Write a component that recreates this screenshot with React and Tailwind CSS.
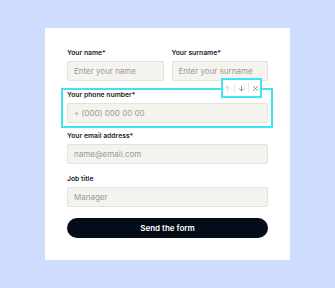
import React from 'react';

// Simple contact form card with a selected (highlighted) field
const Field = ({ label, placeholder }) => (
  <div className="flex flex-col">
    <label className="block text-[6.8px] leading-[10px] font-semibold text-[#1b1b1b] mb-[3px]">{label}</label>
    <input
      placeholder={placeholder}
      className="h-[20px] w-full bg-[#f4f3ee] border border-[#e4e2da] rounded-[2px] px-[6px] text-[8px] text-[#222] placeholder:text-[#9b9a95] outline-none"
    />
  </div>
);

const App = () => {
  return (
    <div className="w-[335px] h-[288px] bg-[#cddcfd] flex items-center justify-center font-['Inter',sans-serif]">
      <div className="w-[245px] bg-white px-[22px] pt-[20px] pb-[22px] flex flex-col">
        <div className="grid grid-cols-2 gap-[8px]">
          <Field label="Your name*" placeholder="Enter your name" />
          <Field label="Your surname*" placeholder="Enter your surname" />
        </div>

        {/* Selected field */}
        <div className="relative mt-[7px] -ml-[6px] -mr-[5px] pl-[4px] pr-[3px] pb-[3px] border-2 border-[#3fe4f4]">
          <Field label="Your phone number*" placeholder="+ (000) 000 00 00" />
          <div className="absolute -top-[12px] right-[9px] h-[20px] w-[41px] bg-white border-2 border-[#3fe4f4] flex items-center justify-center">
            <svg width="7" height="7" viewBox="0 0 24 24" fill="none" stroke="#c4c4c4" strokeWidth="2.5" strokeLinecap="round" strokeLinejoin="round">
              <path d="M12 20V4M5 11l7-7 7 7" />
            </svg>
            <span className="w-px h-[8px] bg-[#e6e6e6] mx-[3px]" />
            <svg width="7" height="7" viewBox="0 0 24 24" fill="none" stroke="#6b6b6b" strokeWidth="2.5" strokeLinecap="round" strokeLinejoin="round">
              <path d="M12 4v16M5 13l7 7 7-7" />
            </svg>
            <span className="w-px h-[8px] bg-[#e6e6e6] mx-[3px]" />
            <svg width="7" height="7" viewBox="0 0 24 24" fill="none" stroke="#6b6b6b" strokeWidth="2.5" strokeLinecap="round">
              <path d="M5 5l14 14M19 5L5 19" />
            </svg>
          </div>
        </div>

        <div className="mt-[3px]">
          <Field label="Your email address*" placeholder="name@email.com" />
        </div>
        <div className="mt-[10px]">
          <Field label="Job title" placeholder="Manager" />
        </div>

        <button className="mt-[11px] h-[20px] w-full rounded-full bg-[#060d1a] text-white text-[8px] font-semibold">
          Send the form
        </button>
      </div>
    </div>
  );
};

export default App;
